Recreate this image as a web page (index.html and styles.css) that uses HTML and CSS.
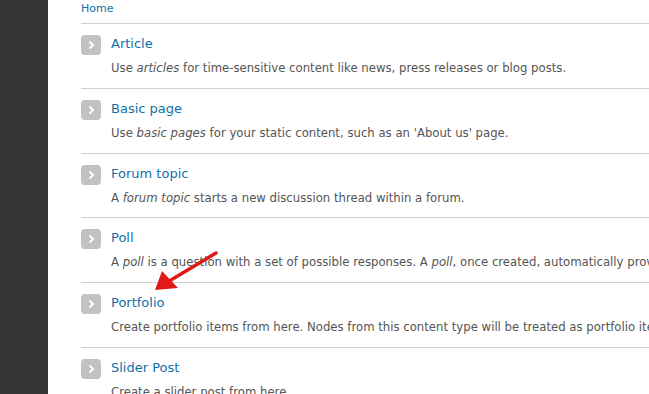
FILE: index.html
```html
<!DOCTYPE html>
<html>
	<head>
		<meta charset="UTF-8">
		<title>Add content</title>
		<link rel="stylesheet" href="styles.css">
	</head>
	<body>
		<div class="page">
			<div class="sidebar"></div>
			<div class="content">
				<div class="breadcrumb"><a href="#">Home</a></div>
				<ul class="types">
					<li>
						<span class="icon"><svg width="20" height="20" viewBox="0 0 20 20"><path d="M8.5 6.5 L12 10 L8.5 13.5" fill="none" stroke="#fff" stroke-width="2"/></svg></span>
						<div class="text">
							<a class="title" href="#">Article</a>
							<div class="desc">Use <em>articles</em> for time-sensitive content like news, press releases or blog posts.</div>
						</div>
					</li>
					<li>
						<span class="icon"><svg width="20" height="20" viewBox="0 0 20 20"><path d="M8.5 6.5 L12 10 L8.5 13.5" fill="none" stroke="#fff" stroke-width="2"/></svg></span>
						<div class="text">
							<a class="title" href="#">Basic page</a>
							<div class="desc">Use <em>basic pages</em> for your static content, such as an 'About us' page.</div>
						</div>
					</li>
					<li>
						<span class="icon"><svg width="20" height="20" viewBox="0 0 20 20"><path d="M8.5 6.5 L12 10 L8.5 13.5" fill="none" stroke="#fff" stroke-width="2"/></svg></span>
						<div class="text">
							<a class="title" href="#">Forum topic</a>
							<div class="desc">A <em>forum topic</em> starts a new discussion thread within a forum.</div>
						</div>
					</li>
					<li>
						<span class="icon"><svg width="20" height="20" viewBox="0 0 20 20"><path d="M8.5 6.5 L12 10 L8.5 13.5" fill="none" stroke="#fff" stroke-width="2"/></svg></span>
						<div class="text">
							<a class="title" href="#">Poll</a>
							<div class="desc">A <em>poll</em> is a question with a set of possible responses. A <em>poll</em>, once created, automatically provides a simple running count of the number of votes received for each response.</div>
						</div>
					</li>
					<li>
						<span class="icon"><svg width="20" height="20" viewBox="0 0 20 20"><path d="M8.5 6.5 L12 10 L8.5 13.5" fill="none" stroke="#fff" stroke-width="2"/></svg></span>
						<div class="text">
							<a class="title" href="#">Portfolio</a>
							<div class="desc">Create portfolio items from here. Nodes from this content type will be treated as portfolio items.</div>
						</div>
					</li>
					<li>
						<span class="icon"><svg width="20" height="20" viewBox="0 0 20 20"><path d="M8.5 6.5 L12 10 L8.5 13.5" fill="none" stroke="#fff" stroke-width="2"/></svg></span>
						<div class="text">
							<a class="title" href="#">Slider Post</a>
							<div class="desc">Create a slider post from here.</div>
						</div>
					</li>
				</ul>
			</div>
		</div>
		<svg class="arrow" width="649" height="394" viewBox="0 0 649 394">
			<line x1="216" y1="253" x2="166" y2="283" stroke="#e0191b" stroke-width="3.5" stroke-linecap="round"/>
			<polygon points="155,290 162,271 178,288" fill="#e0191b"/>
		</svg>
	</body>
</html>
```
FILE: styles.css
```css
body{
	margin: 0;
	font-family: "DejaVu Sans", Verdana, sans-serif;
	background: #fff;
	overflow: hidden;
}
.page{
	display: flex;
	height: 394px;
}
.sidebar{
	width: 48px;
	flex: none;
	background: #353535;
}
.content{
	flex: 1;
	padding-left: 33px;
	white-space: nowrap;
	overflow: hidden;
}
a{
	color: #0f70a8;
	text-decoration: none;
}
.breadcrumb{
	font-size: 11px;
	line-height: 16px;
	padding-top: 1px;
	margin-bottom: 6px;
}
.types{
	list-style: none;
	margin: 0;
	padding: 0;
}
.types li{
	display: flex;
	gap: 10px;
	border-top: 1px solid #cfcfcf;
	padding: 11px 0 12px 0;
	height: 40.8px;
}
.icon{
	width: 20px;
	height: 20px;
	flex: none;
	background: #c2c2c2;
	border-radius: 4px;
}
.icon svg{
	display: block;
}
.title{
	display: block;
	font-size: 13px;
	line-height: 18px;
	margin-bottom: 6px;
}
.desc{
	font-size: 11.7px;
	line-height: 18px;
	color: #555;
}
.arrow{
	position: absolute;
	left: 0;
	top: 0;
	pointer-events: none;
}
```
